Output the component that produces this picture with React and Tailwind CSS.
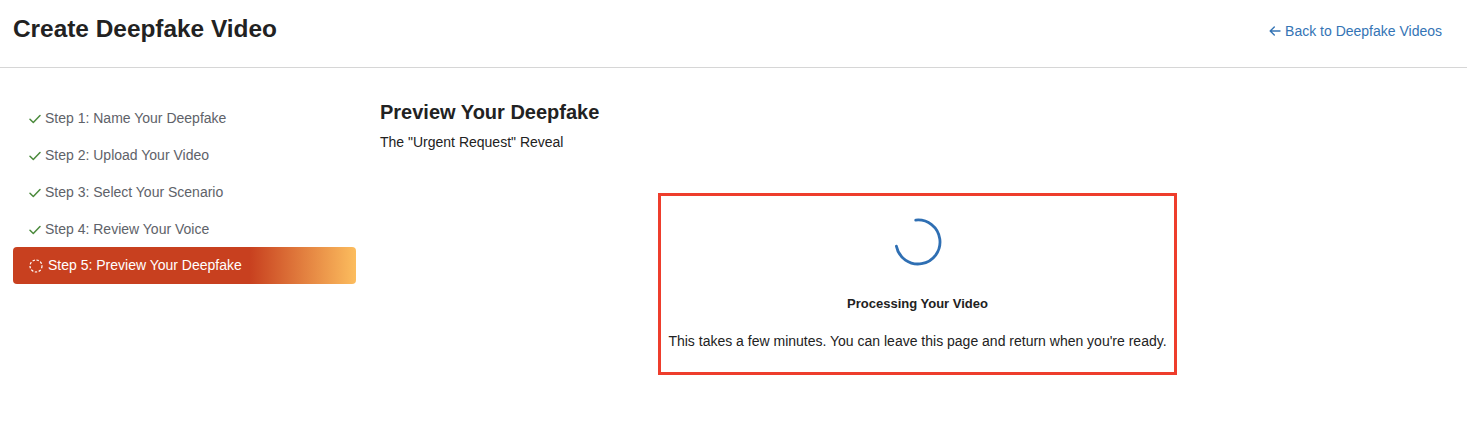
const steps = [
  'Step 1: Name Your Deepfake',
  'Step 2: Upload Your Video',
  'Step 3: Select Your Scenario',
  'Step 4: Review Your Voice',
];

const CheckIcon = () => (
  <svg width="12" height="10" viewBox="0 0 12 10" fill="none" className="shrink-0">
    <path d="M1 5.2 L4.3 8.5 L11 1.5" stroke="#4b8a3c" strokeWidth="1.5" strokeLinecap="round" strokeLinejoin="round" />
  </svg>
);

const Spinner = () => (
  <svg width="48" height="48" viewBox="0 0 48 48" fill="none">
    <path d="M21.7 2.1 A22 22 0 1 1 2.4 28.2" stroke="#2f6fb3" strokeWidth="2.8" strokeLinecap="round" />
  </svg>
);

const App = () => {
  return (
    <div className="min-h-[446px] bg-white text-[#222] font-['Liberation_Sans',Arial,sans-serif]">
      <div className="h-[68px] px-[13px] flex items-center justify-between border-b border-[#d6d6d6]">
        <h1 className="text-[24.4px] font-bold leading-none -mt-[9px]">Create Deepfake Video</h1>
        <a href="#" className="text-[14px] text-[#3474b5] mr-[12px] -mt-[5px] flex items-center gap-[4px]">
          <svg width="12" height="10" viewBox="0 0 12 10" fill="none">
            <path d="M11 5 H1.5 M5.3 1 L1.2 5 L5.3 9" stroke="#3474b5" strokeWidth="1.4" strokeLinecap="round" strokeLinejoin="round" />
          </svg>
          Back to Deepfake Videos
        </a>
      </div>

      <div className="flex pl-[13px] pr-[12px] pt-[31px]">
        <div className="w-[343px] shrink-0">
          {steps.map((s) => (
            <div key={s} className="h-[37px] flex items-center gap-[4px] pl-[16px] pt-[2px] text-[14px] text-[#5e6269]">
              <CheckIcon />
              <span>{s}</span>
            </div>
          ))}
          <div className="h-[37px] flex items-center gap-[5px] pl-[16px] text-[14px] text-white rounded-[4px] bg-[linear-gradient(90deg,#c8401f_0%,#c8401f_69%,#fcbd5e_100%)]">
            <svg width="14" height="14" viewBox="0 0 14 14" fill="none" className="shrink-0">
              <circle cx="7" cy="7" r="6" stroke="white" strokeWidth="1.2" strokeDasharray="2.4 1.6" />
            </svg>
            <span>Step 5: Preview Your Deepfake</span>
          </div>
        </div>

        <div className="flex-1 ml-[24px] pt-[1px]">
          <h2 className="text-[20px] font-bold leading-[24px]">Preview Your Deepfake</h2>
          <p className="mt-[8px] text-[14px] leading-[20px]">The "Urgent Request" Reveal</p>

          <div className="mt-[41px] mx-auto w-fit border-[3px] border-[#ee3d2c] px-[7px] pt-[22px] pb-[21px] flex flex-col items-center">
            <Spinner />
            <div className="mt-[29px] text-[13px] font-bold leading-[18px]">Processing Your Video</div>
            <p className="mt-[18px] text-[14px] leading-[20px]">
              This takes a few minutes. You can leave this page and return when you're ready.
            </p>
          </div>
        </div>
      </div>
    </div>
  );
};

export default App;
